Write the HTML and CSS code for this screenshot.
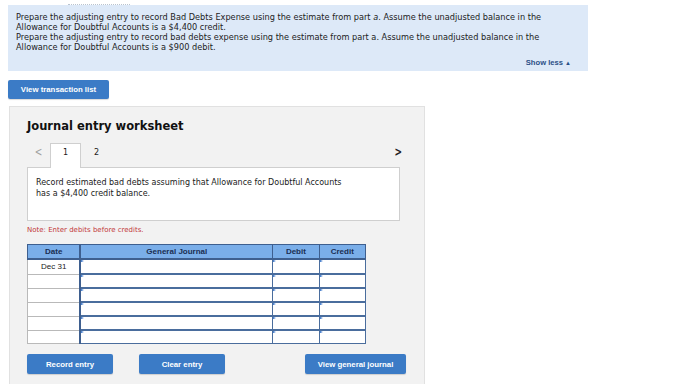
FILE: index.html
```html
<!DOCTYPE html>
<html>
<head>
<meta charset="utf-8">
<link rel="stylesheet" href="styles.css">
</head>
<body>
<div class="page">
  <div class="dots"></div>
  <div class="info">
    <p>Prepare the adjusting entry to record Bad Debts Expense using the estimate from part <i>a</i>. Assume the unadjusted balance in the<br>Allowance for Doubtful Accounts is a $4,400 credit.<br>Prepare the adjusting entry to record bad debts expense using the estimate from part a. Assume the unadjusted balance in the<br>Allowance for Doubtful Accounts is a $900 debit.</p>
    <div class="showless">Show less <span class="tri">&#9650;</span></div>
  </div>
  <div class="btnrow"><button class="btn vtl">View transaction list</button></div>
  <div class="panel">
    <h2 class="title">Journal entry worksheet</h2>
    <div class="tabs">
      <span class="arrow prev">&lt;</span>
      <span class="tab active">1</span>
      <span class="tab">2</span>
      <span class="arrow next">&gt;</span>
    </div>
    <div class="desc">Record estimated bad debts assuming that Allowance for Doubtful Accounts<br>has a $4,400 credit balance.</div>
    <div class="note">Note: Enter debits before credits.</div>
    <table class="journal">
      <thead>
        <tr><th class="c-date">Date</th><th class="c-gj">General Journal</th><th class="c-num">Debit</th><th class="c-num">Credit</th></tr>
      </thead>
      <tbody>
        <tr class="first"><td class="date">Dec 31</td><td class="in"></td><td class="in"></td><td class="in"></td></tr>
        <tr><td class="date"></td><td class="in"></td><td class="in"></td><td class="in"></td></tr>
        <tr><td class="date"></td><td class="in"></td><td class="in"></td><td class="in"></td></tr>
        <tr><td class="date"></td><td class="in"></td><td class="in"></td><td class="in"></td></tr>
        <tr><td class="date"></td><td class="in"></td><td class="in"></td><td class="in"></td></tr>
        <tr><td class="date"></td><td class="in"></td><td class="in"></td><td class="in"></td></tr>
      </tbody>
    </table>
    <div class="actions">
      <button class="btn act">Record entry</button>
      <button class="btn act">Clear entry</button>
      <button class="btn act wide">View general journal</button>
    </div>
  </div>
</div>
</body>
</html>
```
FILE: styles.css
```css
html, body {
  margin: 0;
  padding: 0;
  background: #ffffff;
}
.page {
  padding: 0 0 0 8px;
  font-family: "DejaVu Sans", Verdana, sans-serif;
  color: #1a1a1a;
}
.dots {
  margin-left: 60px;
  width: 62px;
  height: 4px;
  border-bottom: 1px dotted #b9c3cf;
}
.info {
  width: 580px;
  height: 66px;
  box-sizing: border-box;
  background: #dde9f8;
  padding: 7px 17px 0 8px;
  display: flex;
  flex-direction: column;
}
.info p {
  margin: 0;
  font-size: 8.2px;
  line-height: 10px;
  color: #1c1c1c;
  white-space: nowrap;
}
.showless {
  align-self: flex-end;
  margin-top: 6px;
  font-family: "Liberation Sans", Arial, sans-serif;
  font-weight: bold;
  font-size: 7.6px;
  line-height: 9px;
  color: #2a4f86;
}
.showless .tri {
  font-size: 6px;
}
.btnrow {
  margin-top: 9px;
  display: flex;
}
.btn {
  border: none;
  border-radius: 2px;
  background: #3b7bc6;
  color: #ffffff;
  font-family: "Liberation Sans", Arial, sans-serif;
  font-weight: bold;
  font-size: 7.8px;
  padding: 0;
  cursor: pointer;
  box-shadow: 0 1px 1px rgba(0,0,0,0.15);
}
.vtl {
  width: 101px;
  height: 19px;
}
.panel {
  margin-top: 7px;
  margin-left: 1px;
  width: 416px;
  box-sizing: border-box;
  background: #f2f2f2;
  border: 1px solid #e1e1e1;
  border-bottom: none;
  padding: 12px 18px 10px 17px;
}
.title {
  margin: 0;
  font-size: 11.5px;
  line-height: 14px;
  font-weight: bold;
  color: #111111;
}
.tabs {
  margin-top: 10px;
  height: 24px;
  display: flex;
  align-items: stretch;
}
.arrow {
  display: flex;
  align-items: flex-start;
  padding-top: 3px;
  font-size: 12px;
  line-height: 12px;
}
.prev {
  width: 23px;
  justify-content: center;
  color: #a0a0a0;
  font-family: "DejaVu Sans", sans-serif;
  transform: scaleX(0.75);
}
.next {
  margin-left: auto;
  width: 12px;
  margin-right: 1px;
  color: #222;
  font-weight: bold;
  font-family: "DejaVu Sans", sans-serif;
  transform: scaleX(0.75);
}
.tab {
  width: 31px;
  display: flex;
  align-items: flex-start;
  justify-content: center;
  padding-top: 5px;
  font-size: 8px;
  line-height: 9px;
  color: #1a1a1a;
  box-sizing: border-box;
}
.tab.active {
  background: #ffffff;
  border: 1px solid #cfcfcf;
  border-bottom: none;
  padding-top: 4px;
  margin-bottom: -1px;
  position: relative;
  z-index: 1;
}
.desc {
  width: 373px;
  height: 54px;
  box-sizing: border-box;
  background: #ffffff;
  border: 1px solid #cfcfcf;
  padding: 9px 8px 0 8px;
  font-size: 8px;
  line-height: 11px;
  color: #1a1a1a;
}
.note {
  margin-top: 4px;
  font-size: 7px;
  line-height: 10px;
  color: #c2393a;
}
.journal {
  margin-top: 9px;
  border-collapse: collapse;
  width: 339px;
  table-layout: fixed;
  font-family: "Liberation Sans", Arial, sans-serif;
}
.journal th {
  background: #7aaee9;
  color: #1b2f52;
  font-size: 8px;
  font-weight: bold;
  height: 13px;
  padding: 0;
  border: 1px solid #3e5f8f;
  border-bottom-width: 2px;
}
.c-date { width: 51px; }
.c-gj { width: 189px; }
.c-num { width: 45px; }
.journal th.c-date { border-right-width: 2px; }
.journal td {
  height: 12px;
  padding: 0;
  background: #ffffff;
}
.journal tr.first td {
  height: 13px;
}
.journal td.date {
  border: 1px solid #b9b9b9;
  border-right: 2px solid #3e5f8f;
  text-align: center;
  font-size: 8px;
  color: #222;
}
.journal td.in {
  border: 1px solid #4a6d9d;
  border-top-width: 2px;
  position: relative;
}
.journal td.in::before {
  content: "";
  position: absolute;
  left: 0;
  top: 0;
  border-left: 3px solid #2f6ec6;
  border-top: 1.5px solid transparent;
  border-bottom: 1.5px solid transparent;
}
.actions {
  margin-top: 10px;
  display: flex;
  gap: 26px;
}
.act {
  width: 86px;
  height: 20px;
}
.act.wide {
  width: 101px;
  margin-left: auto;
}
```
